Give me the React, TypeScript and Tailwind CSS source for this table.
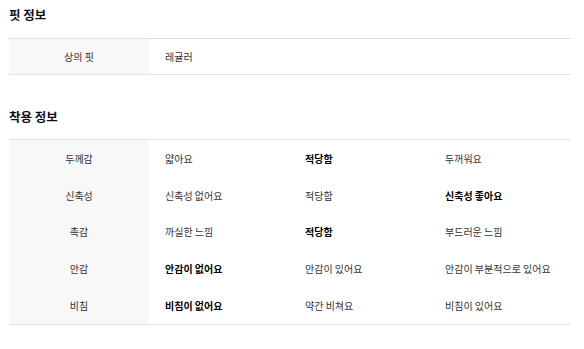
const fit = [{ label: "상의 핏", values: [{ text: "레귤러", bold: false }] }];

const wear = [
  {
    label: "두께감",
    values: [
      { text: "얇아요", bold: false },
      { text: "적당함", bold: true },
      { text: "두꺼워요", bold: false },
    ],
  },
  {
    label: "신축성",
    values: [
      { text: "신축성 없어요", bold: false },
      { text: "적당함", bold: false },
      { text: "신축성 좋아요", bold: true },
    ],
  },
  {
    label: "촉감",
    values: [
      { text: "까실한 느낌", bold: false },
      { text: "적당함", bold: true },
      { text: "부드러운 느낌", bold: false },
    ],
  },
  {
    label: "안감",
    values: [
      { text: "안감이 없어요", bold: true },
      { text: "안감이 있어요", bold: false },
      { text: "안감이 부분적으로 있어요", bold: false },
    ],
  },
  {
    label: "비침",
    values: [
      { text: "비침이 없어요", bold: true },
      { text: "약간 비쳐요", bold: false },
      { text: "비침이 있어요", bold: false },
    ],
  },
];

interface Row {
  label: string;
  values: { text: string; bold: boolean }[];
}

const InfoTable = ({ rows, rowClass }: { rows: Row[]; rowClass: string }) => (
  <div className="border-y border-[#e0e0e0]">
    {rows.map((row) => (
      <div key={row.label} className={`flex items-center ${rowClass}`}>
        <div className="flex h-full w-[140px] shrink-0 items-center justify-center bg-[#f8f8f8] text-[#333]">
          {row.label}
        </div>
        <div className="flex flex-1 pl-4">
          {row.values.map((v) => (
            <div
              key={v.text}
              className={
                v.bold
                  ? "w-[140px] shrink-0 font-bold text-black"
                  : "w-[140px] shrink-0 text-[#333]"
              }
            >
              {v.text}
            </div>
          ))}
        </div>
      </div>
    ))}
  </div>
);

export default function App() {
  return (
    <div
      className="w-[584px] bg-white pl-[9px] pr-[13px] pt-[6px] text-[10px]"
      style={{ fontFamily: '"Noto Sans CJK KR", "Noto Sans", sans-serif' }}
    >
      <h2 className="h-[32px] text-[12.5px] font-bold leading-[18px] text-[#111]">
        핏 정보
      </h2>
      <InfoTable rows={fit} rowClass="h-[35px]" />
      <h2 className="mt-[33px] h-[31px] text-[12.5px] font-bold leading-[18px] text-[#111]">
        착용 정보
      </h2>
      <InfoTable rows={wear} rowClass="h-[36.8px]" />
    </div>
  );
}
